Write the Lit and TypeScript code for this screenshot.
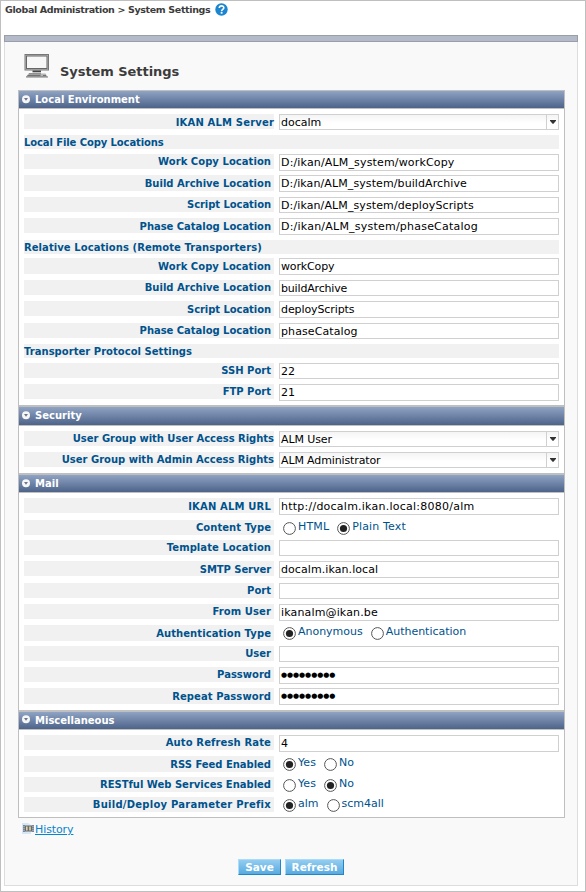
import { LitElement, html, css, svg, nothing } from "lit";
import { customElement, property } from "lit/decorators.js";
import { classMap } from "lit/directives/class-map.js";
import { styleMap } from "lit/directives/style-map.js";

// labelTrack and valueTrack are letter spacings in px.
interface Tracks {
  labelTrack?: number;
  valueTrack?: number;
}

type Row = Tracks &
  (
    | { kind: "text"; label: string; value: string }
    | { kind: "password"; label: string; length: number }
    | { kind: "select"; label: string; value: string }
    | { kind: "radio"; label: string; options: string[]; selected: number }
    | { kind: "band"; label: string }
  );

interface Section {
  title: string;
  rows: Row[];
}

const text = (label: string, value = "", labelTrack = 0, valueTrack = 0): Row => ({
  kind: "text",
  label,
  value,
  labelTrack,
  valueTrack,
});
const band = (label: string, labelTrack = 0): Row => ({ kind: "band", label, labelTrack });
const select = (label: string, value: string, labelTrack = 0, valueTrack = 0): Row => ({
  kind: "select",
  label,
  value,
  labelTrack,
  valueTrack,
});
const password = (label: string, length: number, labelTrack = 0): Row => ({
  kind: "password",
  label,
  length,
  labelTrack,
});
const radio = (label: string, options: string[], selected: number, labelTrack = 0, valueTrack = 0): Row => ({
  kind: "radio",
  label,
  options,
  selected,
  labelTrack,
  valueTrack,
});

const SECTIONS: Section[] = [
  {
    title: "Local Environment",
    rows: [
      select("IKAN ALM Server", "docalm", 0.17, -0.03),
      band("Local File Copy Locations", -0.1),
      text("Work Copy Location", "D:/ikan/ALM_system/workCopy", 0.05, 0.16),
      text("Build Archive Location", "D:/ikan/ALM_system/buildArchive", 0, 0.1),
      text("Script Location", "D:/ikan/ALM_system/deployScripts", -0.07, 0.11),
      text("Phase Catalog Location", "D:/ikan/ALM_system/phaseCatalog", -0.03, 0.22),
      band("Relative Locations (Remote Transporters)", 0.07),
      text("Work Copy Location", "workCopy", 0.05, -0.15),
      text("Build Archive Location", "buildArchive", 0, -0.17),
      text("Script Location", "deployScripts", -0.07, -0.1),
      text("Phase Catalog Location", "phaseCatalog", -0.03, 0.1),
      band("Transporter Protocol Settings", 0.03),
      text("SSH Port", "22"),
      text("FTP Port", "21"),
    ],
  },
  {
    title: "Security",
    rows: [
      select("User Group with User Access Rights", "ALM User", -0.03, -0.1),
      select("User Group with Admin Access Rights", "ALM Administrator", 0, -0.13),
    ],
  },
  {
    title: "Mail",
    rows: [
      text("IKAN ALM URL", "http://docalm.ikan.local:8080/alm", 0.17, 0.24),
      radio("Content Type", ["HTML", "Plain Text"], 1, 0.06, 0.15),
      text("Template Location", "", 0.06),
      text("SMTP Server", "docalm.ikan.local", -0.07, 0.08),
      text("Port"),
      text("From User", "ikanalm@ikan.be", 0.1, 0.15),
      radio("Authentication Type", ["Anonymous", "Authentication"], 0, 0.08, -0.02),
      text("User"),
      password("Password", 9),
      password("Repeat Password", 9, 0.1),
    ],
  },
  {
    title: "Miscellaneous",
    rows: [
      text("Auto Refresh Rate", "4", 0.13),
      radio("RSS Feed Enabled", ["Yes", "No"], 0, -0.02, 0.05),
      radio("RESTful Web Services Enabled", ["Yes", "No"], 1, -0.01, 0.05),
      radio("Build/Deploy Parameter Prefix", ["alm", "scm4all"], 0, 0.25, 0),
    ],
  },
];

@customElement("settings-row")
export class SettingsRow extends LitElement {
  @property({ attribute: false }) row!: Row;

  static styles = css`
    :host {
      display: block;
      font: 10px/14px "DejaVu Sans", Verdana, sans-serif;
    }
    .row {
      display: grid;
      grid-template-columns: 250px 280px;
      column-gap: 5px;
      align-items: start;
      height: 21.4px;
    }
    .row.select {
      height: 21.2px;
    }
    .row.radio {
      height: 20.2px;
    }
    .row.server {
      height: 21px;
    }
    .label {
      height: 15.2px;
      box-sizing: border-box;
      padding: 0.4px 3px 0 0;
      background: #f1f1f1;
      color: #00528c;
      font-weight: bold;
      text-align: right;
      line-height: 15px;
      white-space: nowrap;
    }
    .select .label {
      padding-right: 0;
    }
    .band {
      height: 14px;
      margin-bottom: 4.8px;
      background: #f1f1f1;
      color: #00528c;
      font-weight: bold;
      line-height: 15.6px;
      white-space: nowrap;
    }
    .field {
      display: flex;
      box-sizing: border-box;
      height: 16.6px;
      border: 1px solid #d0d0d0;
      background: #fff;
      padding-left: 1px;
      color: #000;
      font-size: 11px;
      line-height: 15px;
      white-space: pre;
    }
    .select .field {
      background: linear-gradient(#f4f4f4, #fff 60%);
    }
    .server .field {
      height: 16.2px;
    }
    .value {
      flex: 1;
    }
    .dots {
      font-size: 7px;
      line-height: 15.4px;
      letter-spacing: -0.08px;
    }
    .arrow {
      display: flex;
      align-items: center;
      justify-content: center;
      width: 11px;
      border-left: 1px solid #d0d0d0;
    }
    .options {
      display: flex;
      padding-left: 4px;
      color: #00528c;
      font-size: 11px;
    }
    .option {
      display: flex;
      gap: 2px;
      margin-right: 8px;
    }
    .option svg {
      margin-top: 2px;
    }
  `;

  private renderControl(row: Row) {
    const track = styleMap({ letterSpacing: `${row.valueTrack ?? 0}px` });
    switch (row.kind) {
      case "text":
        return html`<div class="field"><span class="value" style=${track}>${row.value}</span></div>`;
      case "password":
        return html`<div class="field"><span class="value dots">${"●".repeat(row.length)}</span></div>`;
      case "select":
        return html`<div class="field">
          <span class="value" style=${track}>${row.value}</span
          ><span class="arrow"
            ><svg width="6" height="4" viewBox="0 0 6 4">
              <path d="M0 0h6v0.800L3.500 3.800h-1L0 0.800z" fill="#333" /></svg
          ></span>
        </div>`;
      case "radio":
        return html`<div class="options">
          ${row.options.map(
            (name, i) => html`<span class="option"
              ><svg width="13" height="13" viewBox="0 0 13 13">
                <circle cx="6.5" cy="6.5" r="5.9" fill="#fff" stroke="#555" stroke-width="1" />
                ${i === row.selected ? svg`<circle cx="6.5" cy="6.5" r="3.6" fill="#222" />` : nothing}</svg
              ><span style=${track}>${name}</span></span
            >`,
          )}
        </div>`;
      default:
        return nothing;
    }
  }

  render() {
    const row = this.row;
    const track = styleMap({ letterSpacing: `${row.labelTrack ?? 0}px` });
    if (row.kind === "band") return html`<div class="band" style=${track}>${row.label}</div>`;
    const classes = { row: true, [row.kind]: true, server: row.label === "IKAN ALM Server" };
    return html`<div class=${classMap(classes)}>
      <div class="label" style=${track}>${row.label}</div>
      ${this.renderControl(row)}
    </div>`;
  }
}

@customElement("app-root")
export class AppRoot extends LitElement {
  static styles = css`
    :host {
      display: block;
      box-sizing: border-box;
      height: 892px;
      border: 1px solid #bfbfbf;
      background: #fff;
      padding: 0 7px 5px 3px;
      font: 10px/14px "DejaVu Sans", Verdana, sans-serif;
    }
    .page {
      display: flex;
      flex-direction: column;
      height: 100%;
    }
    .crumbs {
      display: flex;
      height: 34px;
      padding-left: 1px;
      color: #3c3c3c;
      font-size: 9.5px;
      font-weight: bold;
      letter-spacing: -0.36px;
      line-height: 17px;
      white-space: nowrap;
    }
    .help {
      margin: 2px 0 0 5px;
    }
    .bar {
      box-sizing: border-box;
      height: 7px;
      border: 1px solid #999eac;
      background: #b4bac8;
    }
    .panel {
      flex: 1;
      border: 1px solid #ddd;
      border-top: 0;
      background: #f9f9f9;
      padding: 0 12px 0 13px;
    }
    .title {
      display: flex;
      height: 48px;
      padding-left: 6px;
      color: #3c3c3c;
      font-size: 13px;
      font-weight: bold;
      letter-spacing: -0.06px;
      line-height: 20px;
    }
    .title svg {
      margin: 12px 9px 0 0;
    }
    .title span {
      margin-top: 20px;
    }
    .settings {
      border: solid #bfbfbf;
      border-width: 0 1px 1px;
      background: #fff;
    }
    .head {
      display: flex;
      height: 17.4px;
      padding-left: 3px;
      border-top: 2px solid #bfbfbf;
      border-bottom: 1px solid #bfbfbf;
      background: linear-gradient(#8fa3c3, #4d6389) padding-box;
      color: #fff;
      font-weight: bold;
      line-height: 18px;
      gap: 5px;
    }
    .head svg {
      margin-top: 3.6px;
    }
    .section:first-child .head {
      border-top-width: 1px;
    }
    .rows {
      padding: 4.8px 5px 0;
    }
    .history {
      display: flex;
      margin: 5px 0 0 4px;
      gap: 1px;
      color: #0a84cc;
      font-size: 11px;
      letter-spacing: -0.1px;
      text-decoration: underline;
    }
    .buttons {
      display: flex;
      justify-content: center;
      gap: 4px;
      margin: 22px 1px 0 0;
    }
    .button {
      box-sizing: border-box;
      width: 43px;
      height: 16px;
      padding: 0;
      border: 1px solid;
      border-color: #a9dcf8 #2186c6 #2186c6 #a9dcf8;
      background: linear-gradient(#93cdf0, #58aae0);
      color: #fff;
      font: bold 10.5px/14px "DejaVu Sans", Verdana, sans-serif;
    }
    .button.wide {
      width: 59px;
    }
  `;

  private renderSection(section: Section) {
    return html`<div class="section">
      <div class="head">
        <svg width="8" height="9" viewBox="0 0 8 9">
          <circle cx="4" cy="4.3" r="4" fill="#f6f6f4" />
          <path d="M2 3.1h4L4 5.800z" fill="#6a7690" />
        </svg>
        <span>${section.title}</span>
      </div>
      <div class="rows">${section.rows.map((row) => html`<settings-row .row=${row}></settings-row>`)}</div>
    </div>`;
  }

  render() {
    return html`<div class="page">
      <div class="crumbs">
        <span>Global Administration &gt; System Settings</span>
        <svg class="help" width="13" height="13" viewBox="0 0 13 13">
          <circle cx="6.5" cy="6.5" r="6.2" fill="#1b86cf" />
          <path d="M4.3 5.1c0-3 4.6-2.8 4.5-.2C8.700 6.500 6.600 6.500 6.600 8.200" fill="none" stroke="#fff" stroke-width="1.6" />
          <rect x="5.700" y="9" width="1.800" height="1.700" fill="#fff" />
        </svg>
      </div>
      <div class="bar"></div>
      <div class="panel">
        <div class="title">
          <svg width="27" height="24" viewBox="0 0 27 24">
            <rect x="1" y="0.500" width="23.500" height="15.500" fill="#c4c4c4" stroke="#777" />
            <rect x="2.500" y="2" width="20.500" height="12.500" fill="#f7f7f7" stroke="#666" />
            <path d="M8.500 16.500h8.500v1.800H8.500z" fill="#444" />
            <path d="M4.500 19.500h17l2 3.500H2z" fill="#b5b5b5" />
            <path d="M5 19.800h12M3.500 21.500h13M19 21.500h3M2 23h22" stroke="#6a6a6a" stroke-width="0.900" />
          </svg>
          <span>System Settings</span>
        </div>
        <div class="settings">${SECTIONS.map((section) => this.renderSection(section))}</div>
        <div class="history">
          <svg width="12" height="11" viewBox="0 0 12 11">
            <path d="M0 0h6l3 2v9H0z" fill="#d5e6f5" />
            <rect x="1" y="2" width="11" height="7" fill="#9aa6b8" />
            <path d="M2 2v7M11 2v7" stroke="#5a6678" stroke-dasharray="1 1" />
            <rect x="3" y="3" width="7" height="5" fill="#6b6b64" />
            <rect x="4" y="3.500" width="1.600" height="4" fill="#ddd3b4" />
            <rect x="7.200" y="3.500" width="1.600" height="4" fill="#ddd3b4" />
          </svg>
          <span>History</span>
        </div>
        <div class="buttons">
          <button class="button">Save</button>
          <button class="button wide">Refresh</button>
        </div>
      </div>
    </div>`;
  }
}
